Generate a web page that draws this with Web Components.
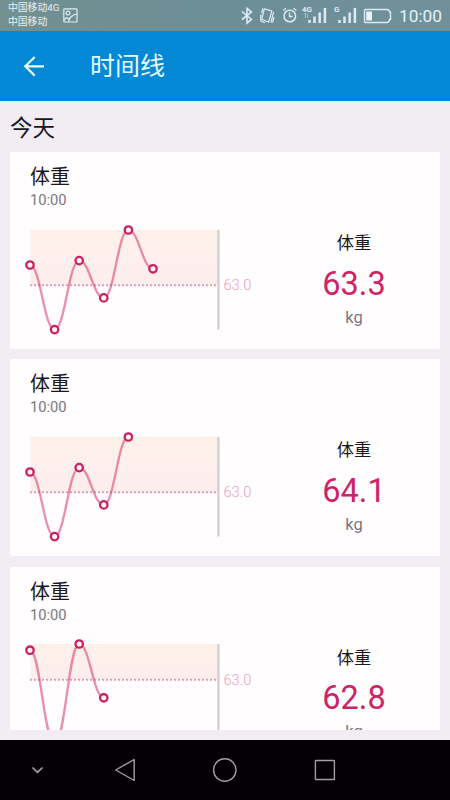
<!DOCTYPE html>
<html lang="zh-CN">
<head>
<meta charset="utf-8">
<title>时间线</title>
<style>
html,body{margin:0;height:100%;overflow:hidden}
body{font-family:Roboto,"Noto Sans CJK SC",sans-serif;color:#1b181d}
</style>
</head>
<body>
<timeline-app></timeline-app>
<script>
class Base extends HTMLElement{
  connectedCallback(){
    if(this.shadowRoot)return;
    this.attachShadow({mode:'open'}).innerHTML=this.render();
  }
}
customElements.define('status-bar',class extends Base{
  render(){return `<style>
:host{display:flex;height:31px;flex:none;box-sizing:border-box;background:linear-gradient(90deg,#739091,#6c8e97 50%,#71919a);color:#e2f1f8;padding:0 8px 0 8px;justify-content:space-between}
.left{display:flex;gap:4px}
.carriers{font-size:9.8px;line-height:13.5px;padding-top:1px;white-space:nowrap}
.left svg{margin-top:8px}
.right{display:flex;align-items:flex-start}
time{font-size:17.3px;line-height:20px;padding-top:6px;margin-left:4.5px}
svg{display:block;fill:none;stroke:#dcebf3}
svg text{fill:#dcebf3;stroke:none;font:bold 8px Roboto,sans-serif}
</style>
<div class="left"><div class="carriers"><div>中国移动4G</div><div>中国移动</div></div>
<svg width="15" height="15" viewBox="0 0 15 15" stroke-width="1.2"><rect x=".8" y=".8" width="13.2" height="13.2" rx=".7"/><circle cx="5" cy="5" r="1.9"/><path d="M1 12.5C4 7.500 4 11 6 10.500S9 6 14 6M5.500 14L7 10"/></svg></div>
<div class="right">
<svg width="155" height="31" viewBox="240 0 155 31">
<path stroke-width="1.6" d="M243 11.500L252.500 19.500 248 23V8.500L252.500 12 243 19.500"/>
<g stroke-width="1.2"><path d="M265.300 8.800L272.800 11 269.700 22.200 262.800 19.200Z"/><path d="M261.800 14.500L261.800 20.800 266 22.800M274.500 12L272 22.500M275 17L273.500 22.500M262.500 13L264 8.500"/></g>
<g stroke-width="1.5"><circle cx="290.800" cy="16" r="5.800"/><path d="M290.500 12.500V16.500H293.500M284.200 10.500L287 8.300M294.500 8.300L297.400 10.500" stroke-width="1.3"/></g>
<text x="303" y="11.500">4G</text>
<path stroke-width="1" d="M306.500 13V18M305 14.500L306.500 13M308.500 13.500V18" opacity=".5"/>
<path stroke-width="2.500" d="M310.500 20V23M315.500 16.500V23M320.700 12.500V23M325.900 8V23"/>
<text x="335" y="11.500">G</text>
<path stroke-width="2.500" d="M340.500 20V23M345.500 16.500V23M350.700 12.500V23M355.900 8V23"/>
<path stroke-width="1.400" d="M366.500 9.500H388.500Q390.500 10 390.500 12H391.500V19.500H390.500Q390.500 22 388.500 22.500H366.500Q365.500 22.500 365.500 21.500V10.500Q365.500 9.500 366.500 9.500Z"/>
<path d="M367.200 11.500H373V20.500H367.200Z" fill="#e8f4fa" stroke="none"/>
</svg><time>10:00</time></div>`}
});
customElements.define('app-bar',class extends Base{
  render(){return `<style>
:host{display:flex;flex:none;height:70px;background:#0288d4;color:#e8fcff;align-items:center;padding-left:23px;gap:45px;font-size:25px;line-height:70px;box-sizing:border-box}
svg{display:block}span{display:block;height:68px}
</style><svg width="22" height="22" viewBox="0 0 22 22" fill="none" stroke="#e8fcff" stroke-width="2.200"><path d="M21 11.300H3M11.700 2L2.300 11.300 11.700 20.600"/></svg><span><slot></slot></span>`}
});
customElements.define('weight-chart',class extends Base{
  render(){
    const ys=this.getAttribute('values').split(',').map(Number);
    const base=+this.getAttribute('baseline');
    const pts=ys.map((y,i)=>[+(i*24.6).toFixed(1),y]);
    let d=`M${pts[0]}`;
    for(let i=1;i<pts.length;i++){
      const [x0,y0]=pts[i-1],[x1,y1]=pts[i],k=10.5;
      d+=`C${x0+k},${y0} ${x1-k},${y1} ${x1},${y1}`;
    }
    return `<style>
:host{display:block;width:230px;height:100px}
svg{display:block;overflow:visible}
text{font:300 14.600px Roboto,sans-serif;fill:#e9a0c2}
</style><svg width="230" height="100" viewBox="0 0 230 100">
<defs><linearGradient id="g" x1="0" y1="0" x2="0" y2="1"><stop offset="0" stop-color="#fef0e9"/><stop offset="1" stop-color="#fdeeee"/></linearGradient></defs>
<rect x=".5" width="187" height="${base}" fill="url(#g)"/>
<path d="M0 ${base-.2}H186" stroke="#e3a0b7" stroke-width="2" stroke-dasharray="2 2"/>
<path d="M188.400 0V99.500" stroke="#d3d1d4" stroke-width="2.400"/>
<path d="${d}" fill="none" stroke="#d62065" stroke-opacity=".5" stroke-width="2.300"/>
${pts.map(([x,y])=>`<circle cx="${x}" cy="${y}" r="3.700" fill="#fff3f7" stroke="#c9205f" stroke-width="2.300"/>`).join('')}
<text x="193.500" y="${base+4.5}">63.0</text></svg>`}
});
customElements.define('weight-card',class extends Base{
  render(){return `<style>
:host{display:grid;grid-template-columns:258px 172px;height:197px;flex:none;background:#fffdfe;border-radius:1.500px}
.left{padding:11px 0 0 20px}
.title{font-size:20px;line-height:28px;color:#1b181d}
.time{font-size:14.700px;line-height:20px;color:#7c777e;margin-top:-1px}
weight-chart{margin-top:19.600px}
.right{display:flex;flex-direction:column;align-items:center;padding-top:79px;box-sizing:border-box}
.label{font-size:17.300px;line-height:24px}
.value{font-size:32.500px;line-height:40px;color:#cf2364;margin-top:8.500px}
.unit{font-size:16.500px;line-height:20px;color:#7c777e;margin-top:4px}
</style>
<div class="left"><div class="title">体重</div><div class="time">10:00</div>
<weight-chart values="${this.getAttribute('values')}" baseline="${this.getAttribute('baseline')}"></weight-chart></div>
<div class="right"><div class="label">体重</div><div class="value"><slot></slot></div><div class="unit">kg</div></div>`}
});
customElements.define('nav-bar',class extends Base{
  render(){return `<style>:host{display:block;height:60px;flex:none;background:#020003}svg{display:block}</style>
<svg width="450" height="60" viewBox="0 0 450 60" fill="none" stroke="#a39da6" stroke-width="1.400" stroke-linejoin="round">
<path d="M32.500 27.500L37.500 32.300 42.500 27.500" stroke-width="1.700"/><path d="M115.700 30L134.200 19.500V40.500Z"/><circle cx="224.800" cy="30" r="11.200"/><rect x="315.400" y="20.500" width="19" height="19" rx=".5"/></svg>`}
});
customElements.define('timeline-app',class extends Base{
  render(){return `<style>
:host{display:flex;flex-direction:column;width:450px;height:800px;background:#f1edf3}
main{flex:1;min-height:0;margin:0 10px 10px;overflow:hidden;display:flex;flex-direction:column}
h1{font-size:22.500px;line-height:32px;font-weight:400;margin:11px 0 8px;flex:none}
.cards{display:flex;flex-direction:column;gap:10.400px}
</style>
<status-bar></status-bar><app-bar>时间线</app-bar>
<main><h1>今天</h1><div class="cards">
<weight-card values="35,99.600,30.600,67.900,0,38.800" baseline="55.500">63.3</weight-card>
<weight-card values="35,99.600,30.600,67.900,0" baseline="55.500">64.1</weight-card>
<weight-card values="6.200,99.800,0,53.800" baseline="36">62.8</weight-card>
</div></main><nav-bar></nav-bar>`}
});
</script>
</body>
</html>
